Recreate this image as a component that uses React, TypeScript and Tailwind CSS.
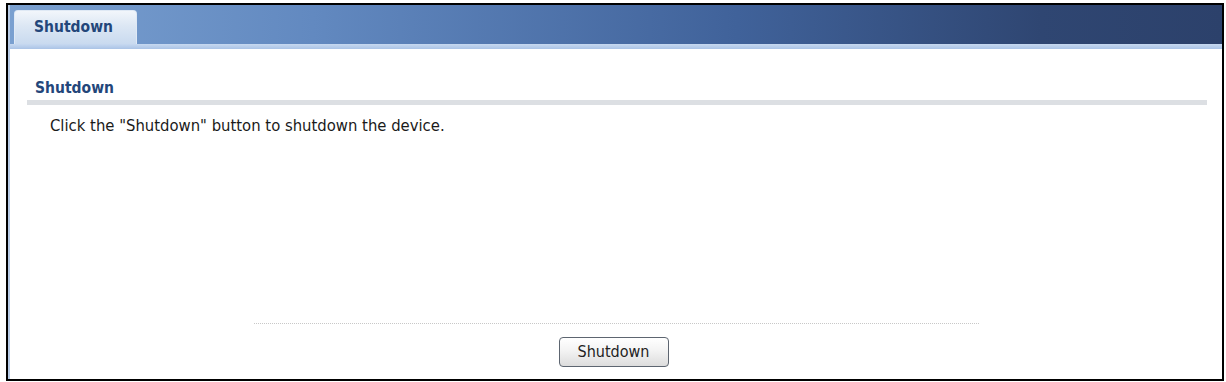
export default function App() {
  const font = { fontFamily: 'Tahoma, "DejaVu Sans Condensed", "DejaVu Sans", sans-serif' };
  return (
    <div className="w-[1226px] h-[382px] bg-white pt-[3px] pl-[6px] pr-[2px] pb-[1px]" style={font}>
      <div className="h-full flex flex-col border-2 border-black">
        <div className="flex flex-col h-full border-l-2 border-[#b7cbe6]">
          <div className="h-[39px] flex items-end pl-[4px] bg-[linear-gradient(90deg,#7aa0d0_0%,#6289c0_25%,#40629a_60%,#2f4672_85%,#2c416b_100%)]">
            <div className="w-[123px] h-[34px] rounded-t-[4px] border border-b-0 border-[#dfe9f5] bg-[linear-gradient(180deg,#f2f6fb_0%,#dce7f4_45%,#c9daef_100%)] flex items-center justify-center">
              <span className="text-[15.5px] font-bold text-[#23467a] -ml-[4px]">Shutdown</span>
            </div>
          </div>
          <div className="h-[5px] bg-[linear-gradient(180deg,#c7d9f0_0%,#aac3e6_100%)]" />
          <div className="flex-1 flex flex-col">
            <div className="pl-[17px] pr-[15px] pt-[30px]">
              <div className="text-[15.5px] font-bold text-[#23467a] leading-[18px] pl-[8px]">Shutdown</div>
              <div className="h-[5px] bg-[#dcdfe3] mt-[3px]" />
              <div className="text-[16.5px] text-[#1a1a1a] pl-[23px] mt-[11px] leading-[20px]">
                Click the "Shutdown" button to shutdown the device.
              </div>
            </div>
            <div className="flex-1" />
            <div className="flex justify-center">
              <div className="w-[725px] border-t border-dotted border-[#c8c8c8]" />
            </div>
            <div className="flex justify-center mt-[13px] mb-[12px]">
              <button className="w-[110px] h-[30px] -ml-[5px] rounded-[4px] border border-[#5d6570] bg-[linear-gradient(180deg,#ffffff_0%,#f3f3f3_45%,#dcdcdc_100%)] text-[16px] text-[#222]">
                Shutdown
              </button>
            </div>
          </div>
        </div>
      </div>
    </div>
  );
}
